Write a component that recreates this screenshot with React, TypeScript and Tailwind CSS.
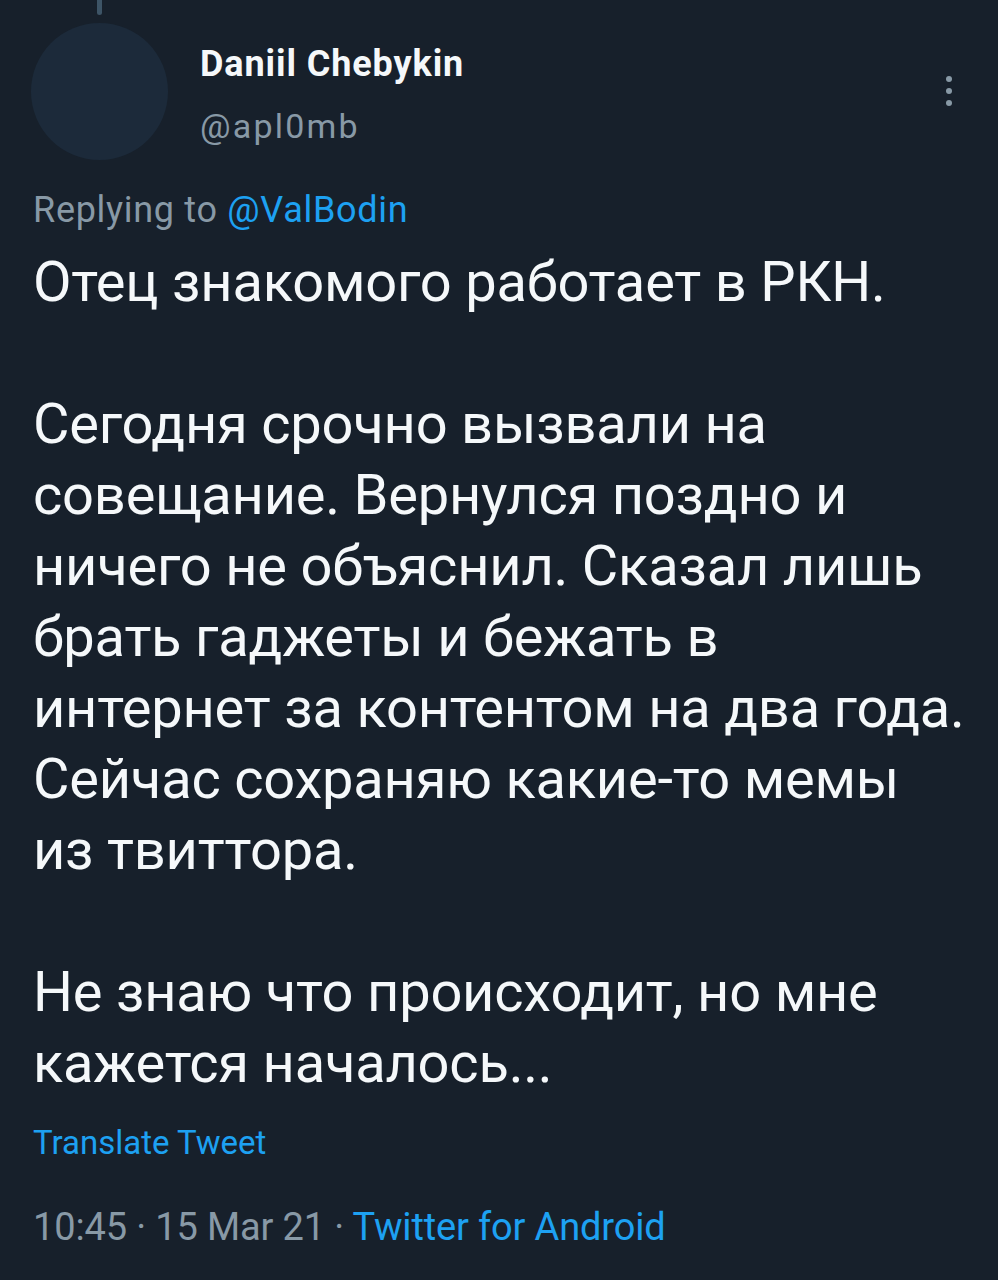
import React from 'react';

const bodyLines: string[][] = [
  ['Отец знакомого работает в РКН.'],
  [
    'Сегодня срочно вызвали на',
    'совещание. Вернулся поздно и',
    'ничего не объяснил. Сказал лишь',
    'брать гаджеты и бежать в',
    'интернет за контентом на два года.',
    'Сейчас сохраняю какие-то мемы',
    'из твиттора.',
  ],
  ['Не знаю что происходит, но мне', 'кажется началось...'],
];

const TweetDetail: React.FC = () => {
  return (
    <div className="min-h-[1280px] w-full bg-[#17202b] font-['Roboto',sans-serif] text-white">
      {/* thread line */}
      <div className="ml-[97px] h-[15px] w-[5px] rounded-b-sm bg-[#3d5466]" />

      {/* header */}
      <div className="mt-[8px] flex items-start pl-[31px] pr-[46px]">
        <div className="h-[137px] w-[137px] shrink-0 rounded-full bg-[#1c2a3a]" />
        <div className="ml-[32px] mt-[22px] flex flex-col">
          <div className="text-[36px] font-bold leading-[38px] tracking-[0.9px] text-[#f5f8fa]">Daniil Chebykin</div>
          <div className="mt-[24px] text-[34px] leading-[38px] tracking-[2.2px] text-[#8899a6]">@apl0mb</div>
        </div>
        <div className="ml-auto mt-[53px] flex flex-col gap-[6px]">
          <span className="h-[6px] w-[6px] rounded-full bg-[#8899a6]" />
          <span className="h-[6px] w-[6px] rounded-full bg-[#8899a6]" />
          <span className="h-[6px] w-[6px] rounded-full bg-[#8899a6]" />
        </div>
      </div>

      <div className="px-[33px]">
        <div className="mt-[30px] text-[36px] leading-[40px] tracking-[0.7px] text-[#8899a6]">
          Replying to <span className="text-[#1da1f2]">@ValBodin</span>
        </div>

        {/* tweet text */}
        <div className="mt-[17px] flex flex-col gap-[71px] text-[56px] leading-[71px] tracking-[-0.2px] text-[#f5f8fa]">
          {bodyLines.map((para, i) => (
            <div key={i}>
              {para.map((line, j) => (
                <div key={j} className="whitespace-nowrap">{line}</div>
              ))}
            </div>
          ))}
        </div>

        <div className="mt-[26px] text-[33px] leading-[36px] text-[#1da1f2]">Translate Tweet</div>

        <div className="mt-[44px] text-[38px] leading-[44px] tracking-[-0.15px] text-[#8899a6]">
          10:45 · 15 Mar 21 · <span className="text-[#1da1f2]">Twitter for Android</span>
        </div>
      </div>
    </div>
  );
};

export default function App() {
  return <TweetDetail />;
}
